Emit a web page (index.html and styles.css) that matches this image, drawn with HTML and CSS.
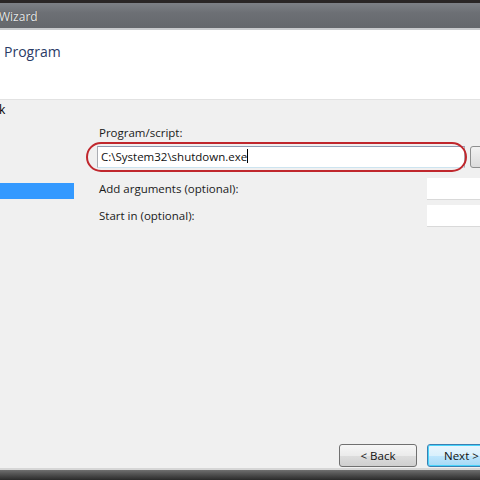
FILE: index.html
```html
<!DOCTYPE html>
<html>
<head>
<meta charset="utf-8">
<link rel="stylesheet" href="styles.css">
</head>
<body>
<div class="window">
  <div class="titlebar"><span class="title">Wizard</span></div>
  <div class="header"><h1 class="heading">Program</h1></div>
  <div class="main">
    <div class="steps">
      <div class="step">k</div>
      <div class="step step-sel"></div>
    </div>
    <div class="content">
      <div class="label">Program/script:</div>
      <div class="prog-row">
        <div class="prog-field">
          <div class="input input-wide">C:\System32\shutdown.exe<span class="caret"></span></div>
          <div class="ellipse"></div>
        </div>
        <div class="browse"></div>
      </div>
      <div class="opt-row">
        <div class="label">Add arguments (optional):</div>
        <div class="input input-short"></div>
      </div>
      <div class="opt-row">
        <div class="label">Start in (optional):</div>
        <div class="input input-short"></div>
      </div>
      <div class="spacer"></div>
      <div class="buttons">
        <div class="btn">&lt; Back</div>
        <div class="btn btn-default">Next &gt;</div>
      </div>
    </div>
  </div>
  <div class="bottombar"></div>
</div>
</body>
</html>
```

FILE: styles.css
```css
html, body {
  margin: 0;
  padding: 0;
  width: 480px;
  height: 480px;
  overflow: hidden;
  font-family: "Open Sans", "Noto Sans", sans-serif;
}
.window {
  width: 480px;
  height: 480px;
  display: flex;
  flex-direction: column;
  background: #f0f0f0;
  overflow: hidden;
}
.titlebar {
  height: 25px;
  border-top: 3px solid #2a2626;
  border-bottom: 2px solid #c9cbce;
  background: linear-gradient(to bottom, #7d8086 0%, #6c6f74 40%, #65686d 100%);
  display: flex;
  align-items: center;
}
.title {
  font-size: 12px;
  color: #e9eaec;
  text-shadow: 0 0 1px #333;
  margin-left: -1px;
  margin-top: 2px;
}
.header {
  height: 70px;
  background: #ffffff;
  border-bottom: 1px solid #e2e2e2;
  box-sizing: border-box;
  padding: 12px 0 0 4px;
}
.heading {
  margin: 0;
  font-weight: normal;
  font-size: 14px;
  color: #2a3b66;
}
.main {
  flex: 1;
  display: flex;
  background: #f0f0f0;
  min-height: 0;
  overflow: hidden;
}
.steps {
  width: 86px;
  flex-shrink: 0;
  display: flex;
  flex-direction: column;
  padding-top: 2px;
}
.step {
  font-size: 12px;
  height: 16px;
  line-height: 16px;
  color: #000;
  margin-left: -1px;
}
.step-sel {
  margin-top: 65px;
  margin-left: 0;
  width: 74px;
  background: #3399ff;
}
.content {
  flex: 1;
  min-width: 0;
  display: flex;
  flex-direction: column;
  padding: 25px 0 1px 0;
  overflow: hidden;
}
.label {
  font-size: 11.5px;
  color: #1a1a1a;
  margin-left: 13px;
  height: 16px;
  line-height: 16px;
  white-space: nowrap;
}
.prog-row {
  display: flex;
  margin-top: 1px;
  height: 30px;
  align-items: center;
}
.prog-field {
  position: relative;
  width: 381px;
  height: 30px;
  flex-shrink: 0;
  display: flex;
  align-items: center;
}
.input {
  background: #ffffff;
  border: 1px solid #abadb3;
  border-top-color: #8f9bb3;
  box-sizing: border-box;
  height: 22px;
  font-size: 11.5px;
  line-height: 20px;
  color: #111;
  padding-left: 3px;
  white-space: nowrap;
}
.input-wide {
  margin-left: 11px;
  width: 368px;
  border-bottom-color: #cde4f0;
}
.caret {
  display: inline-block;
  width: 1px;
  height: 14px;
  background: #000;
  vertical-align: -2px;
}
.ellipse {
  position: absolute;
  left: 0;
  top: 0;
  width: 381px;
  height: 30px;
  box-sizing: border-box;
  border: 2px solid #c0272d;
  border-radius: 15px / 15px;
}
.browse {
  margin-left: 3px;
  width: 20px;
  height: 22px;
  flex-shrink: 0;
  box-sizing: border-box;
  border: 1px solid #8e8f8f;
  border-radius: 3px;
  background: linear-gradient(to bottom, #f2f2f2, #dcdcdc);
}
.opt-row {
  display: flex;
  align-items: center;
  justify-content: space-between;
  height: 22px;
  margin-top: 6px;
}
.opt-row + .opt-row {
  margin-top: 5px;
}
.input-short {
  width: 53px;
  flex-shrink: 0;
  border: none;
  border-bottom: 1px solid #d9d9d9;
}
.spacer {
  flex: 1;
}
.buttons {
  display: flex;
  gap: 10px;
  padding-left: 253px;
}
.btn {
  width: 78px;
  height: 23px;
  box-sizing: border-box;
  border: 1px solid #707070;
  border-radius: 3px;
  background: linear-gradient(to bottom, #f6f6f6 0%, #ebebeb 50%, #dddddd 51%, #cfcfcf 100%);
  font-size: 11.5px;
  line-height: 21px;
  text-align: center;
  color: #111;
  flex-shrink: 0;
}
.btn-default {
  border-color: #3c7fb1;
  box-shadow: inset 0 0 0 1px #48d4fb;
  background: linear-gradient(to bottom, #eaf6fd 0%, #d9f0fc 50%, #bee6fd 51%, #a7d9f5 100%);
  text-align: left;
  padding-left: 16px;
}
.bottombar {
  height: 10px;
  border-top: 2px solid #d6d6d6;
  background: linear-gradient(to bottom, #6e6e6e, #2a2a2a);
}
```
